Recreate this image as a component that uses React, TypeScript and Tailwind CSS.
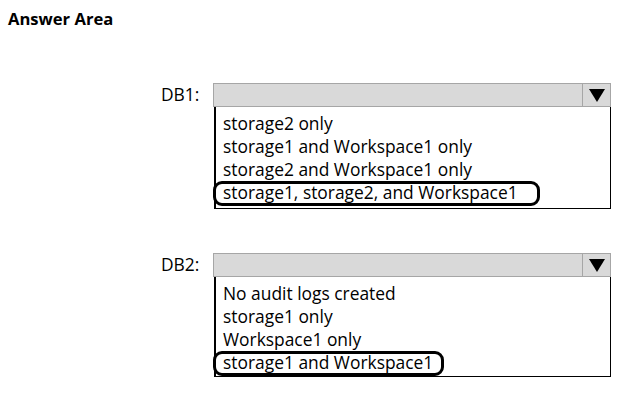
import React from "react";

const font = { fontFamily: '"Open Sans", "Noto Sans", sans-serif' };

function Arrow() {
  return (
    <svg width="16" height="13" viewBox="0 0 16 13">
      <polygon points="0,0 16,0 8,13" fill="#000" />
    </svg>
  );
}

function Block({
  label,
  items,
  ellipseW,
  listH,
}: {
  label: string;
  items: string[];
  ellipseW: number;
  listH: string;
}) {
  return (
    <div className="flex pl-[161px]">
      <div className="w-[52px] h-[24px] flex items-center text-[17.4px] text-black leading-none">{label}</div>
      <div className="w-[398px]">
        <div className="h-[24px] border border-[#a6a6a6] bg-[#d9d9d9] flex justify-end">
          <div className="w-[28px] border-l border-[#a6a6a6] flex items-center justify-center">
            <Arrow />
          </div>
        </div>
        <div className={`${listH} ml-[1px] border border-t-0 border-black border-l-2 pt-[5px] pl-[7px]`}>
          {items.map((t, i) => (
            <div key={i} className="relative h-[23px] leading-[23px] text-[17.4px] text-black whitespace-nowrap">
              {t}
              {i === items.length - 1 && (
                <div
                  className="absolute top-[0px] left-[-10px] h-[25px] rounded-[9px] border-[3px] border-black"
                  style={{ width: ellipseW }}
                />
              )}
            </div>
          ))}
        </div>
      </div>
    </div>
  );
}

export default function App() {
  return (
    <div className="w-[624px] h-[394px] bg-white overflow-hidden" style={font}>
      <div className="pl-[8px] pt-[8px] text-[16.6px] font-bold text-black leading-[22px]">Answer Area</div>
      <div className="mt-[53px]">
        <Block
          label="DB1:"
          items={[
            "storage2 only",
            "storage1 and Workspace1 only",
            "storage2 and Workspace1 only",
            "storage1, storage2, and Workspace1",
          ]}
          ellipseW={327}
          listH="h-[102px]"
        />
      </div>
      <div className="mt-[44px]">
        <Block
          label="DB2:"
          items={["No audit logs created", "storage1 only", "Workspace1 only", "storage1 and Workspace1"]}
          ellipseW={231}
          listH="h-[100px]"
        />
      </div>
    </div>
  );
}
